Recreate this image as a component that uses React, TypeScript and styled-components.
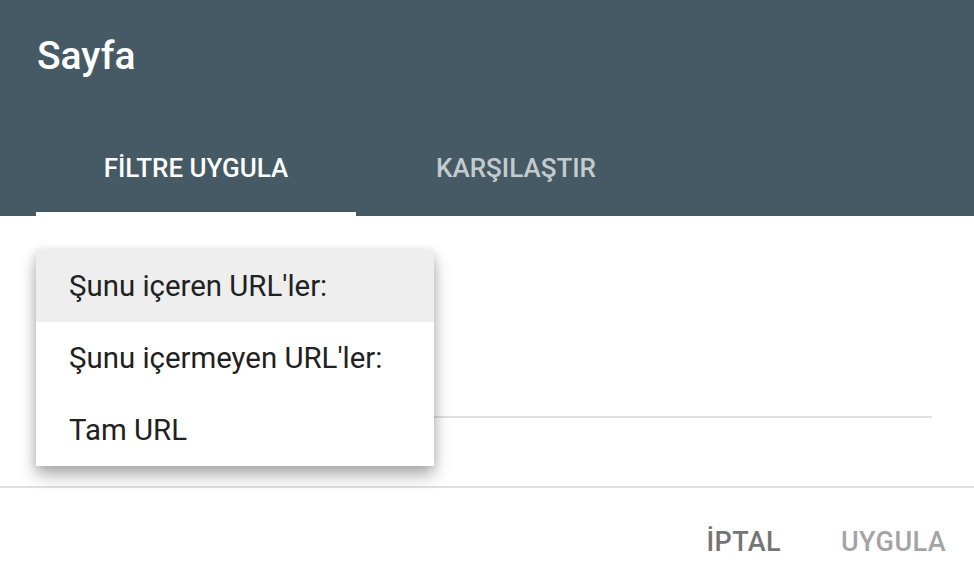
import React from "react";
import styled, { createGlobalStyle } from "styled-components";

const Global = createGlobalStyle`
  html, body { margin: 0; padding: 0; background: #ffffff; }
  body { font-family: Roboto, "Noto Sans", "Liberation Sans", sans-serif; -webkit-font-smoothing: antialiased; }
  * { box-sizing: border-box; }
`;

const Dialog = styled.div`
  width: 974px;
  height: 584px;
  display: flex;
  flex-direction: column;
  background: #ffffff;
  overflow: hidden;
`;

const Header = styled.header`
  background: #455a64;
  height: 216px;
  display: flex;
  flex-direction: column;
  flex-shrink: 0;
`;

const TitleBar = styled.div`
  height: 120px;
  padding: 35px 0 0 37px;
`;

const Title = styled.h1`
  margin: 0;
  font-size: 39px;
  line-height: 42px;
  font-weight: 500;
  color: #ffffff;
`;

const TabBar = styled.div`
  display: flex;
  height: 96px;
  padding-left: 36px;
`;

const Tab = styled.div<{ $active?: boolean }>`
  position: relative;
  width: 320px;
  display: flex;
  align-items: center;
  justify-content: center;
  font-size: 26px;
  font-weight: 500;
  letter-spacing: 0;
  color: ${(p) => (p.$active ? "#ffffff" : "rgba(255,255,255,0.7)")};
  &::after {
    content: "";
    position: absolute;
    left: 0;
    right: 0;
    bottom: 0;
    height: 4px;
    background: ${(p) => (p.$active ? "#ffffff" : "transparent")};
  }
`;

const Body = styled.div`
  position: relative;
  height: 272px;
  padding: 0 42px 0 36px;
  border-bottom: 2px solid #e0e0e0;
  flex-shrink: 0;
`;

const Field = styled.div`
  height: 202px;
  border-bottom: 2px solid #e0e0e0;
`;

const Menu = styled.ul`
  position: absolute;
  left: 36px;
  top: 34px;
  width: 398px;
  margin: 0;
  padding: 0;
  list-style: none;
  background: #ffffff;
  box-shadow: 0 10px 16px rgba(0, 0, 0, 0.28), 0 2px 10px rgba(0, 0, 0, 0.14);
`;

const MenuItem = styled.li<{ $selected?: boolean }>`
  height: 72px;
  display: flex;
  align-items: center;
  padding-left: 33px;
  font-size: 29.4px;
  font-weight: 400;
  color: #212121;
  background: ${(p) => (p.$selected ? "#eeeeee" : "#ffffff")};
`;

const Footer = styled.div`
  flex: 1;
  display: flex;
  justify-content: flex-end;
  align-items: flex-start;
  padding: 30px 12px 0 0;
  gap: 28px;
`;

const Button = styled.button<{ $disabled?: boolean }>`
  border: none;
  background: transparent;
  padding: 0 16px;
  height: 48px;
  font-family: inherit;
  font-size: 27px;
  font-weight: 500;
  letter-spacing: 0.4px;
  color: ${(p) => (p.$disabled ? "#a4a4a4" : "#757575")};
  cursor: pointer;
`;

export default function App() {
  return (
    <>
      <Global />
      <Dialog>
        <Header>
          <TitleBar>
            <Title>Sayfa</Title>
          </TitleBar>
          <TabBar>
            <Tab $active>FİLTRE UYGULA</Tab>
            <Tab>KARŞILAŞTIR</Tab>
          </TabBar>
        </Header>
        <Body>
          <Field />
          <Menu>
            <MenuItem $selected>Şunu içeren URL'ler:</MenuItem>
            <MenuItem>Şunu içermeyen URL'ler:</MenuItem>
            <MenuItem>Tam URL</MenuItem>
          </Menu>
        </Body>
        <Footer>
          <Button>İPTAL</Button>
          <Button $disabled>UYGULA</Button>
        </Footer>
      </Dialog>
    </>
  );
}
